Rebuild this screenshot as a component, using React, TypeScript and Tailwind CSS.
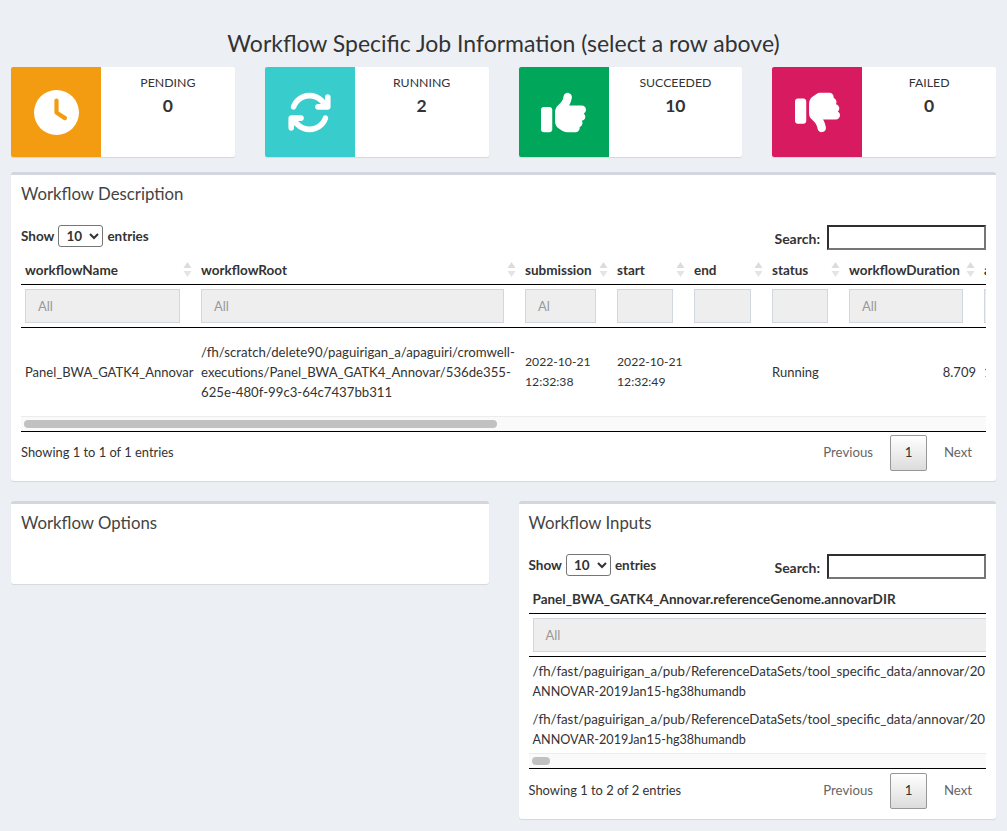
import React from "react";
import { FaClock, FaArrowsRotate, FaThumbsUp, FaThumbsDown } from "react-icons/fa6";

const boxes = [
  { label: "PENDING", value: "0", bg: "bg-[#f39c12]", Icon: FaClock },
  { label: "RUNNING", value: "2", bg: "bg-[#39cccc]", Icon: FaArrowsRotate },
  { label: "SUCCEEDED", value: "10", bg: "bg-[#00a65a]", Icon: FaThumbsUp },
  { label: "FAILED", value: "0", bg: "bg-[#d81b60]", Icon: FaThumbsDown },
];

function SortArrows() {
  return (
    <svg width="9" height="15" viewBox="0 0 9 15" className="absolute right-[5px] top-[4px]">
      <path d="M4.5 0 L8.5 6 L0.5 6 Z" fill="#dcdcdc" />
      <path d="M4.5 15 L8.5 9 L0.5 9 Z" fill="#e4e4e4" />
    </svg>
  );
}

function Th({ children, sort = true }: { children: React.ReactNode; sort?: boolean }) {
  return (
    <th className="relative h-[26px] px-[4px] pb-[1px] text-left align-middle font-bold text-[13.5px] border-b border-black whitespace-nowrap overflow-hidden">
      {children}
      {sort && <SortArrows />}
    </th>
  );
}

function Filter({ text = "", right = 17 }: { text?: string; right?: number }) {
  return (
    <td className="pl-[4px] pt-[4px] pb-[4px] border-b border-black align-top" style={{ paddingRight: right }}>
      <div className="h-[34px] bg-[#eeeeee] border border-[#d2d6de] pl-[12px] leading-[32px] text-[#999999] text-[13px] overflow-hidden">
        {text}
      </div>
    </td>
  );
}

function Controls() {
  return (
    <div className="flex justify-between items-start h-[33px]">
      <label className="flex items-center gap-[4px] font-bold text-[13.5px] h-[22px]">
        Show
        <select className="w-[45px] h-[22px] border border-[#767676] rounded-[3px] bg-white text-[13.5px] font-bold pl-[3px]">
          <option>10</option>
        </select>
        entries
      </label>
      <label className="flex items-center gap-[7px] font-bold text-[14px] h-[25px]">
        <span className="pt-[1px]">Search:</span>
        <input className="w-[159px] h-[25px] bg-white border-2 border-t-[#2f2f2f] border-l-[#2f2f2f] border-b-[#767676] border-r-[#767676]" />
      </label>
    </div>
  );
}

function Scroll({ width }: { width: number }) {
  return (
    <div className="h-[16px] bg-[#fafafa] border-t border-[#ececec] border-b border-b-black pt-[3px] pl-[3px]">
      <div className="h-[8px] rounded-full bg-[#c1c1c1]" style={{ width }} />
    </div>
  );
}

function Footer({ text, className = "" }: { text: string; className?: string }) {
  return (
    <div className={`flex justify-between items-start ${className}`}>
      <div className="pt-[10px] leading-[20px] text-[12.9px]">{text}</div>
      <div className="flex items-center h-[36px] mt-[3px] text-[13.2px] text-[#666666]">
        <span className="mr-[17px]">Previous</span>
        <span className="w-[37px] h-[36px] flex items-center justify-center rounded-[2px] border border-[#979797] bg-gradient-to-b from-white to-[#dcdcdc] text-[#333333]">
          1
        </span>
        <span className="ml-[17px] mr-[14px]">Next</span>
      </div>
    </div>
  );
}

function Panel({ title, className = "", children }: { title: string; className?: string; children?: React.ReactNode }) {
  return (
    <section className={`bg-white border-t-[3px] border-[#d2d6de] rounded-[3px] shadow-[0_1px_1px_rgba(0,0,0,0.1)] ${className}`}>
      <h3 className="px-[10px] pt-[9px] pb-[11px] text-[16.8px] leading-[20px] text-[#444444]">{title}</h3>
      {children}
    </section>
  );
}

function InputRow({ height }: { height: string }) {
  return (
    <tr className={height}>
      <td className="px-[4px] pt-[1px] whitespace-nowrap">
        <span className="text-[13.3px]">/fh/fast/paguirigan_a/pub/ReferenceDataSets/tool_specific_data/annovar/20</span>
        <br />
        ANNOVAR-2019Jan15-hg38humandb
      </td>
    </tr>
  );
}

export default function App() {
  return (
    <div
      className="min-h-screen bg-[#ecf0f5] text-[#333333] px-[11px] pt-[30px] overflow-hidden"
      style={{ fontFamily: '"Lato", "Noto Sans", sans-serif' }}
    >
      <h1 className="text-center text-[23px] leading-[26px] mb-[11px] font-normal">
        Workflow Specific Job Information (select a row above)
      </h1>

      <div className="grid grid-cols-4 gap-x-[30px] mb-[15px]">
        {boxes.map(({ label, value, bg, Icon }) => (
          <div key={label} className="flex h-[90px] bg-white rounded-[2px] overflow-hidden shadow-[0_1px_1px_rgba(0,0,0,0.1)]">
            <div className={`w-[90px] flex items-center justify-center text-white ${bg}`}>
              <Icon size={45} />
            </div>
            <div className="flex-1 text-center pt-[6px]">
              <div className="text-[12.3px] leading-[20px]">{label}</div>
              <div className="font-bold text-[17.5px] leading-[25px]">{value}</div>
            </div>
          </div>
        ))}
      </div>

      <Panel title="Workflow Description" className="h-[309px] mb-[20px]">
        <div className="px-[10px] pt-[10px]">
          <Controls />
          <div className="overflow-hidden">
            <table className="table-fixed w-[1100px] border-collapse">
              <colgroup>
                <col className="w-[176px]" />
                <col className="w-[324px]" />
                <col className="w-[92px]" />
                <col className="w-[77px]" />
                <col className="w-[78px]" />
                <col className="w-[77px]" />
                <col className="w-[135px]" />
                <col className="w-[141px]" />
              </colgroup>
              <thead>
                <tr>
                  <Th>workflowName</Th>
                  <Th>workflowRoot</Th>
                  <Th>submission</Th>
                  <Th>start</Th>
                  <Th>end</Th>
                  <Th>status</Th>
                  <Th>workflowDuration</Th>
                  <Th>actualWorkflowLog</Th>
                </tr>
                <tr>
                  <Filter text="All" />
                  <Filter text="All" />
                  <Filter text="Al" />
                  <Filter />
                  <Filter />
                  <Filter />
                  <Filter text="All" />
                  <Filter />
                </tr>
              </thead>
              <tbody className="text-[13px] leading-[20px]">
                <tr className="h-[89px]">
                  <td className="px-[4px] pt-[1px] whitespace-nowrap">Panel_BWA_GATK4_Annovar</td>
                  <td className="px-[4px] pt-[1px] text-[13.2px]">
                    /fh/scratch/delete90/paguirigan_a/apaguiri/cromwell-<br />
                    executions/Panel_BWA_GATK4_Annovar/536de355-<br />
                    625e-480f-99c3-64c7437bb311
                  </td>
                  <td className="px-[4px] pt-[1px] text-[12.2px]">2022-10-21<br />12:32:38</td>
                  <td className="px-[4px] pt-[1px] text-[12.2px]">2022-10-21<br />12:32:49</td>
                  <td className="px-[4px]"></td>
                  <td className="px-[4px] pt-[1px]">Running</td>
                  <td className="px-[4px] pt-[1px] text-right">8.709</td>
                  <td className="px-[4px] pt-[1px]">1</td>
                </tr>
              </tbody>
            </table>
          </div>
          <Scroll width={473} />
          <Footer text="Showing 1 to 1 of 1 entries" />
        </div>
      </Panel>

      <div className="grid grid-cols-2 gap-x-[30px] items-start">
        <Panel title="Workflow Options" className="h-[83px]" />
        <Panel title="Workflow Inputs" className="h-[318px]">
          <div className="px-[10px] pt-[10px]">
            <Controls />
            <div className="overflow-hidden">
              <table className="table-fixed w-[1000px] border-collapse">
                <thead>
                  <tr>
                    <Th sort={false}>Panel_BWA_GATK4_Annovar.referenceGenome.annovarDIR</Th>
                  </tr>
                  <tr>
                    <Filter text="All" right={4} />
                  </tr>
                </thead>
                <tbody className="text-[12.6px] leading-[20px]">
                  <InputRow height="h-[49px]" />
                  <InputRow height="h-[48px]" />
                </tbody>
              </table>
            </div>
            <Scroll width={18} />
            <Footer text="Showing 1 to 2 of 2 entries" className="pt-[1px]" />
          </div>
        </Panel>
      </div>
    </div>
  );
}
